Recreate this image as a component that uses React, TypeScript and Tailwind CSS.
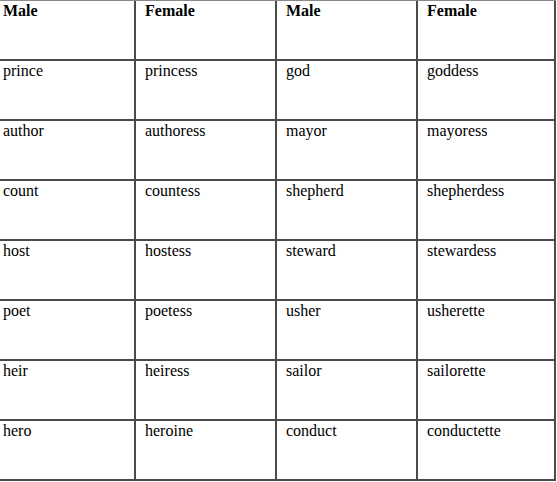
const rows: [string, string, string, string][] = [
  ["prince", "princess", "god", "goddess"],
  ["author", "authoress", "mayor", "mayoress"],
  ["count", "countess", "shepherd", "shepherdess"],
  ["host", "hostess", "steward", "stewardess"],
  ["poet", "poetess", "usher", "usherette"],
  ["heir", "heiress", "sailor", "sailorette"],
  ["hero", "heroine", "conduct", "conductette"],
];

const header = ["Male", "Female", "Male", "Female"];

const cellBase = "h-[60px] border-b-2 border-r-2 border-[#4a4a4a] pt-[1px]";
const pad = ["pl-[3px]", "pl-[9px]", "pl-[9px]", "pl-[9px]"];

export default function App() {
  return (
    <div className="min-h-screen bg-white font-[family-name:'Times_New_Roman','Liberation_Serif',Times,serif] text-[16px] leading-[1.15] text-black">
      <div className="grid w-[556px] grid-cols-[136px_141px_141px_138px] border-t border-[#8a8a8a]">
        {header.map((h, i) => (
          <div key={`h${i}`} className={`${cellBase} ${pad[i]} font-bold`}>
            {h}
          </div>
        ))}
        {rows.map((r, ri) =>
          r.map((c, ci) => (
            <div key={`${ri}-${ci}`} className={`${cellBase} ${pad[ci]}`}>
              {c}
            </div>
          ))
        )}
      </div>
    </div>
  );
}
